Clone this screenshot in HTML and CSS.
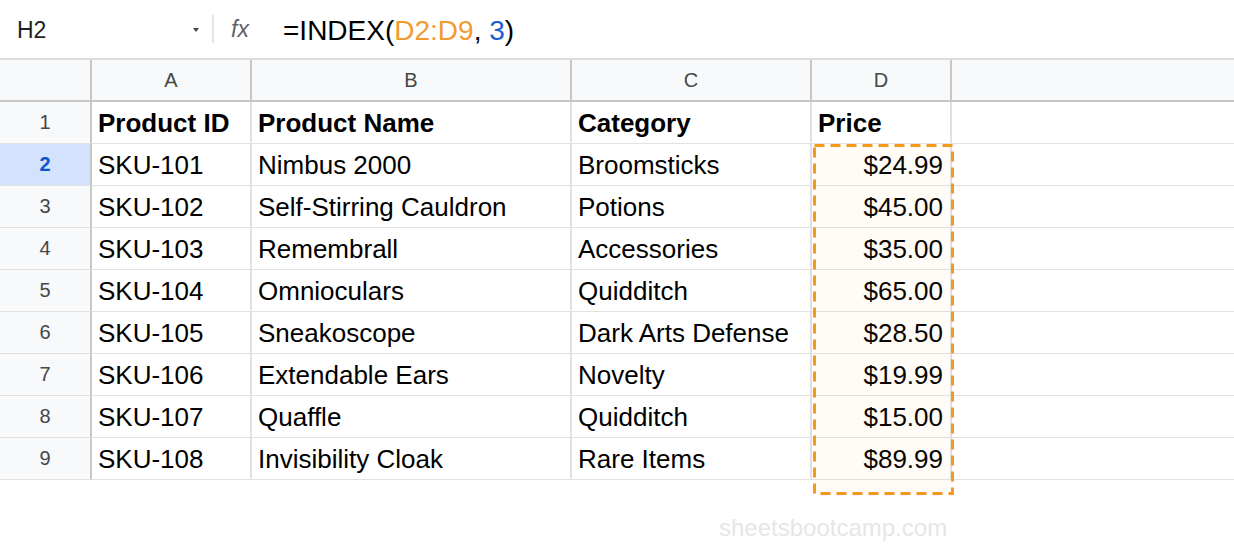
FILE: index.html
```html
<!DOCTYPE html>
<html>
<head>
<meta charset="utf-8">
<link rel="stylesheet" href="styles.css">
</head>
<body>
<div class="formula-bar">
  <div class="namebox"><span class="ref">H2</span><span class="caret"></span></div>
  <div class="sep"></div>
  <div class="fx">fx</div>
  <div class="formula">=INDEX(<span class="rng">D2:D9</span>, <span class="num">3</span>)</div>
</div>
<div class="sheet">
  <div class="row head">
    <div class="rh corner"></div>
    <div class="ch col-a">A</div>
    <div class="ch col-b">B</div>
    <div class="ch col-c">C</div>
    <div class="ch col-d">D</div>
    <div class="ch rest"></div>
  </div>
  <div class="row">
    <div class="rh">1</div>
    <div class="c col-a bold">Product ID</div>
    <div class="c col-b bold">Product Name</div>
    <div class="c col-c bold">Category</div>
    <div class="c col-d bold">Price</div>
    <div class="c rest"></div>
  </div>
  <div class="row">
    <div class="rh active">2</div>
    <div class="c col-a">SKU-101</div>
    <div class="c col-b">Nimbus 2000</div>
    <div class="c col-c">Broomsticks</div>
    <div class="c col-d num-cell">$24.99</div>
    <div class="c rest"></div>
  </div>
  <div class="row">
    <div class="rh">3</div>
    <div class="c col-a">SKU-102</div>
    <div class="c col-b">Self-Stirring Cauldron</div>
    <div class="c col-c">Potions</div>
    <div class="c col-d num-cell">$45.00</div>
    <div class="c rest"></div>
  </div>
  <div class="row">
    <div class="rh">4</div>
    <div class="c col-a">SKU-103</div>
    <div class="c col-b">Remembrall</div>
    <div class="c col-c">Accessories</div>
    <div class="c col-d num-cell">$35.00</div>
    <div class="c rest"></div>
  </div>
  <div class="row">
    <div class="rh">5</div>
    <div class="c col-a">SKU-104</div>
    <div class="c col-b">Omnioculars</div>
    <div class="c col-c">Quidditch</div>
    <div class="c col-d num-cell">$65.00</div>
    <div class="c rest"></div>
  </div>
  <div class="row">
    <div class="rh">6</div>
    <div class="c col-a">SKU-105</div>
    <div class="c col-b">Sneakoscope</div>
    <div class="c col-c">Dark Arts Defense</div>
    <div class="c col-d num-cell">$28.50</div>
    <div class="c rest"></div>
  </div>
  <div class="row">
    <div class="rh">7</div>
    <div class="c col-a">SKU-106</div>
    <div class="c col-b">Extendable Ears</div>
    <div class="c col-c">Novelty</div>
    <div class="c col-d num-cell">$19.99</div>
    <div class="c rest"></div>
  </div>
  <div class="row">
    <div class="rh">8</div>
    <div class="c col-a">SKU-107</div>
    <div class="c col-b">Quaffle</div>
    <div class="c col-c">Quidditch</div>
    <div class="c col-d num-cell">$15.00</div>
    <div class="c rest"></div>
  </div>
  <div class="row">
    <div class="rh">9</div>
    <div class="c col-a">SKU-108</div>
    <div class="c col-b">Invisibility Cloak</div>
    <div class="c col-c">Rare Items</div>
    <div class="c col-d num-cell">$89.99</div>
    <div class="c rest"></div>
  </div>
  <svg class="sel" width="141" height="351" viewBox="0 0 141 351">
    <rect x="1.5" y="1.5" width="138" height="348" fill="rgba(245,154,35,0.035)" stroke="#f4991f" stroke-width="3" stroke-dasharray="10 6"/>
  </svg>
</div>
<div class="watermark">sheetsbootcamp.com</div>
</body>
</html>
```

FILE: styles.css
```css
* { box-sizing: border-box; }
html, body {
  margin: 0;
  padding: 0;
  background: #ffffff;
  font-family: "Liberation Sans", Arial, sans-serif;
}
body { width: 1234px; height: 546px; overflow: hidden; }

.formula-bar {
  height: 58px;
  display: flex;
  align-items: center;
  padding-top: 3px;
}
.namebox {
  width: 212px;
  display: flex;
  align-items: center;
  justify-content: space-between;
  padding-left: 17px;
  padding-right: 13px;
  margin-top: -1px;
}
.ref {
  font-size: 23px;
  color: #1f1f1f;
}
.caret {
  width: 0;
  height: 0;
  border-left: 3px solid transparent;
  border-right: 3px solid transparent;
  border-top: 4px solid #444746;
  margin-top: 0;
}
.sep {
  width: 2px;
  height: 28px;
  background: #e3e3e3;
  margin-top: -3px;
}
.fx {
  width: 69px;
  padding-left: 17px;
  font-size: 23px;
  font-style: italic;
  color: #5f6368;
  margin-top: -2px;
}
.formula {
  font-size: 28px;
  color: #000000;
}
.rng { color: #f29b2e; }
.num { color: #1a5fcf; }

.sheet {
  position: relative;
  border-top: 2px solid #dcdcdc;
}
.row {
  display: flex;
  height: 42px;
}
.row.head {
  height: 42px;
  background: #f8f9fa;
  border-bottom: 2px solid #c7c7c7;
}
.rh {
  width: 92px;
  flex: none;
  border-right: 2px solid #c7c7c7;
  border-bottom: 1px solid #e1e1e1;
  background: #f8f9fa;
  display: flex;
  align-items: center;
  justify-content: center;
  font-size: 20px;
  color: #444746;
}
.rh.corner { border-bottom: none; }
.rh.active {
  background: #d3e3fd;
  color: #0b57d0;
  font-weight: bold;
}
.ch {
  flex: none;
  border-right: 2px solid #c7c7c7;
  display: flex;
  align-items: center;
  justify-content: center;
  font-size: 20px;
  color: #444746;
}
.c {
  flex: none;
  border-right: 2px solid #e1e1e1;
  border-bottom: 1px solid #e1e1e1;
  display: flex;
  align-items: center;
  padding: 2px 7px 0 6px;
  font-size: 26px;
  color: #000000;
  white-space: nowrap;
}
.bold { font-weight: bold; }
.num-cell { justify-content: flex-end; }
.col-a { width: 160px; }
.col-b { width: 320px; }
.col-c { width: 240px; }
.col-d { width: 140px; }
.rest { flex: 1 1 auto; border-right: none; }

.sel {
  position: absolute;
  left: 813px;
  top: 84px;
  pointer-events: none;
}

.watermark {
  padding-left: 719px;
  padding-top: 34px;
  font-size: 24px;
  color: #e6e6e6;
}
```
